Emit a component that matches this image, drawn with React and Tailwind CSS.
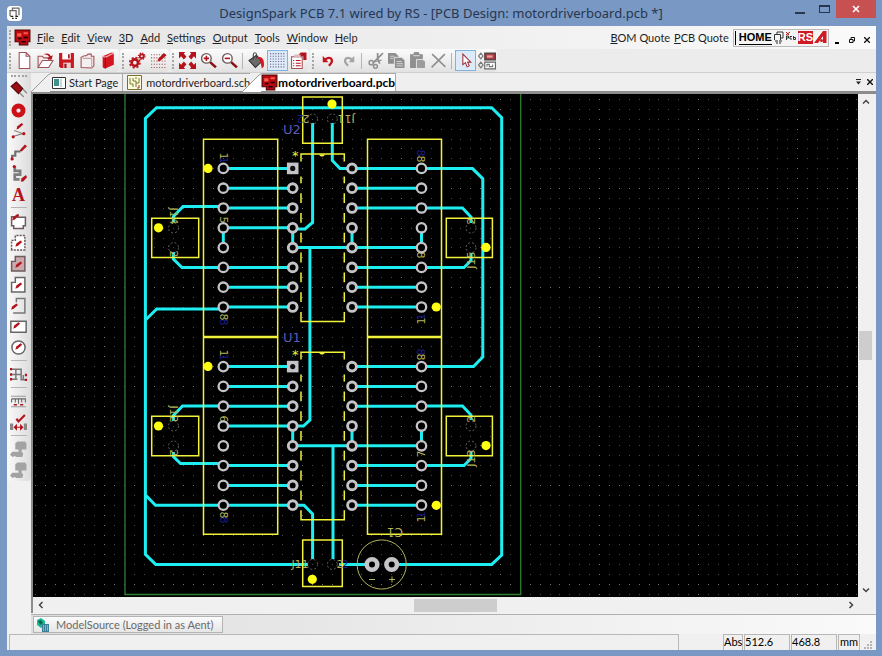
import React from 'react'
import clsx from 'clsx'

const RED = '#b5121b'
const GREY = '#8f8f8f'
const CYAN = '#1ceef2'
const YELLOW = '#f2f23a'
const DIM_YELLOW = '#b4b45a'

const Icon = ({ children, size = 17 }) => (
  <svg width={size} height={size} viewBox="0 0 16 16" fill="none" aria-hidden="true">
    {children}
  </svg>
)

const Pen = ({ x = 0, y = 0 }) => (
  <path d={`M${x} ${y + 6}l1-3 4-3 1.500 1.500-4 3.500z`} fill={RED} />
)

const BoardIcon = () => (
  <Icon>
    <path d="M1 1h14v11h-2v3H5v-3H1z" fill="#b80a10" stroke="#4b0508" />
    <path d="M3 4h4v3H3zM9 3h4v2H9z" fill="#ff5a4a" />
    <path d="M4 9h3M9 8h4M7 12h4" stroke="#1c0202" strokeWidth="1.500" />
  </Icon>
)

const NewFile = () => (
  <Icon><path d="M3 .5h6.500L13 4v11.500H3zM9.500.5V4H13" fill="#fff" stroke="#a0525a" /></Icon>
)
const OpenFile = () => (
  <Icon>
    <path d="M1 14.500V4h4l1.500 1.500H11V8" fill="#f6eaea" stroke="#a0525a" />
    <path d="M1 14.500L5 8h10l-4 6.500z" fill="#fff" stroke="#a0525a" />
    <path d="M6 2c4-1.500 6-.5 7 2l2-1-1.500 4.500L9.500 6l2-1C11 3 9 2 6 2z" fill={RED} />
  </Icon>
)
const Save = () => (
  <Icon>
    <path d="M1 1h14v14H2.500L1 13.500z" fill="#cc1720" />
    <path d="M4 1h8v6H4z" fill="#fff" />
    <path d="M5 10h7v5H5z" fill="#e8d0d0" />
    <path d="M6 11h2v4H6zM9.500 2h1.500v4H9.500z" fill="#a00f16" />
  </Icon>
)
const Folder = () => (
  <Icon>
    <path d="M2 14.500V5l3-1.500h2L8.500 2h3v2H14v9l-2 2z" fill="#f5f0f0" stroke="#a0525a" />
    <path d="M3.500 6H12v9" stroke="#c9a0a4" />
  </Icon>
)
const Book = () => (
  <Icon>
    <path d="M2.500 4L11 .5l2 .5v11L5 15.500l-2.500-1z" fill="#d51620" />
    <path d="M2.500 4L5 5l8-4" stroke="#f4b6b8" />
    <path d="M5 5v10.500" stroke="#8d0d13" />
  </Icon>
)
const Gears = () => (
  <Icon>
    <circle cx="5.500" cy="10" r="3" stroke={RED} strokeWidth="2.500" />
    <circle cx="5.500" cy="10" r="4.800" stroke={RED} strokeWidth="1.500" strokeDasharray="2 1.770" />
    <circle cx="12" cy="4" r="1.800" stroke={RED} strokeWidth="1.600" />
    <circle cx="12" cy="4" r="3" stroke={RED} strokeWidth="1.200" strokeDasharray="1.300 1.050" />
  </Icon>
)
const Dots = () => (
  <g stroke="#a84a52" strokeWidth="1" strokeDasharray="1 1.500">
    <path d="M1 2.500h14M1 5.500h14M1 8.500h14M1 11.500h14M1 14.500h14" />
  </g>
)
const GridEdit = () => (
  <Icon>
    <Dots />
    <path d="M7 9l1-3 5-5 2.500 2-5.500 5z" fill={RED} />
  </Icon>
)
const GridIcon = () => (
  <Icon>
    <g stroke="#6f5a8c" strokeDasharray="1 1.500">
      <path d="M1 1.500h14M1 4h14M1 6.500h14M1 9h14M1 11.500h14M1 14h14" />
    </g>
  </Icon>
)
const Fit = () => (
  <Icon>
    <path d="M0 0h6L4.500 1.500 7 4.500 4.500 7 2 4 0 6zM16 0h-6l1.500 1.500L9 4.500 11.500 7 14 4l2 2zM0 16h6l-1.500-1.500L7 11.500 4.500 9 2 12l-2-2zM16 16h-6l1.500-1.500L9 11.500 11.500 9l2.500 3 2-2z" fill={RED} />
  </Icon>
)
const Magnify = ({ plus }) => (
  <Icon>
    <path d="M9.500 9.500l5.500 5" stroke="#8d0d13" strokeWidth="2.400" />
    <circle cx="6" cy="6" r="4.500" fill="#fff" stroke="#6a5a5c" strokeWidth="1.300" />
    <path d={plus ? 'M3.500 6h5M6 3.500v5' : 'M3.500 6h5'} stroke={RED} strokeWidth="1.500" />
  </Icon>
)
const Bucket = () => (
  <Icon>
    <path d="M1 8l7-5 5 6-6 5.500z" fill="#6a6a6a" stroke="#333" />
    <path d="M5 7V2.500C5 0 8 0 8 2.500V6" stroke="#444" />
    <path d="M9 4.500c5 0 6.500 3 6 9l-2 2-1-5z" fill="#d51620" />
  </Icon>
)
const Report = () => (
  <Icon>
    <path d="M1.500 4.500h10v11h-10z" fill="#fff" stroke="#a0525a" />
    <path d="M3 8h1M3 10.500h1M3 13h1M5.500 8H10M5.500 10.500H10M5.500 13H10" stroke={RED} />
    <path d="M7 4l3-3.500h5.500v7h-3V4z" fill={RED} />
    <path d="M4 2.500h6v3H4z" fill="#d9b9bb" />
  </Icon>
)
const Undo = ({ flip, color }) => (
  <Icon size={14}>
    <g transform={flip ? 'translate(16 0) scale(-1 1)' : undefined}>
      <path d="M5 6c4-3 7.500-1.500 7.500 2 0 2-1.500 3.500-3.500 5.500" stroke={color} strokeWidth="2.600" />
      <path d="M2 2v7.500h6.500z" fill={color} />
    </g>
  </Icon>
)
const Cut = () => (
  <Icon>
    <path d="M15 1L6 10M10 1v5l2 5" stroke={GREY} strokeWidth="1.600" />
    <circle cx="4" cy="10" r="2" stroke={GREY} strokeWidth="1.400" />
    <circle cx="8" cy="13.500" r="1.800" stroke={GREY} strokeWidth="1.400" />
    <path d="M6 9.500l8-2" stroke={GREY} />
  </Icon>
)
const Copy = () => (
  <Icon>
    <path d="M0 1h7l3 3v7H0z" fill={GREY} />
    <path d="M6 5h7l3 3v7.500H6z" fill={GREY} stroke="#eee" strokeWidth=".800" />
    <path d="M2 4h4M2 6h3M8 9h5M8 11h6M8 13h6" stroke="#ddd" strokeWidth=".800" />
  </Icon>
)
const Paste = () => (
  <Icon>
    <path d="M1 2h3l1-2h4l1 2h3v13H1z" fill={GREY} />
    <path d="M4 3.500h6" stroke="#ddd" />
    <path d="M7 7h6l2.500 2v6.500H7z" fill="#9c9c9c" stroke="#eee" strokeWidth=".800" />
  </Icon>
)
const Delete = () => (
  <Icon><path d="M2 2l12.500 12M14 2L1.500 14.500" stroke={GREY} strokeWidth="1.500" /></Icon>
)
const Cursor = () => (
  <Icon><path d="M5.500 2v10l2.500-2 1.500 4 2-1-1.500-3.500h3z" fill="#fff" stroke="#a0323a" /></Icon>
)
const Swap = () => (
  <Icon size={18}>
    <path d="M2.500 1l2 2.500-2 2.500-2-2.500zM2.500 9l2 2.500-2 2.500-2-2.500z" stroke="#777" />
    <path d="M6 1h9.500v6H6z" fill="#a93a42" stroke="#444" />
    <path d="M8 3h5v2H8z" fill="#e7a0a4" />
    <path d="M6 9h9.500v6H6z" fill="#fff" stroke="#666" />
    <path d="M8 13v-2h2v2h3v-2" stroke="#777" />
  </Icon>
)

// left tool column
const Component = () => (
  <Icon>
    <path d="M1 5l5-4 6 6-4 5z" fill="#9b0e15" stroke="#4b0508" />
    <path d="M9 11l4 4M12 7.500l4 4" stroke="#888" strokeWidth="1.200" />
  </Icon>
)
const Pad = () => (
  <Icon><circle cx="8" cy="8" r="4.300" stroke="#cc1119" strokeWidth="4.600" /></Icon>
)
const Connection = () => (
  <Icon>
    <path d="M2 13l10-3-8-3" stroke="#8a7a7a" />
    <circle cx="3" cy="13" r="1.500" fill={RED} />
    <circle cx="13" cy="10" r="1.500" fill={RED} />
    <Pen x={6} y={0} />
  </Icon>
)
const Track = () => (
  <Icon>
    <path d="M2 15v-4h3V7h5" stroke="#6e6e6e" strokeWidth="2" />
    <path d="M9 6l5-5.500 2 1.500-5 5z" fill={RED} />
    <circle cx="2" cy="14" r="1.500" fill={RED} />
  </Icon>
)
const TrackEdit = () => (
  <Icon>
    <path d="M4.500 1v4.500h5V9h-5v4.500H9" stroke="#7d7d7d" strokeWidth="2.600" />
    <circle cx="4" cy="1.500" r="1.500" fill={RED} />
    <path d="M10 15.500l1-3 4-3 1 2-3.500 4z" fill={RED} />
  </Icon>
)
const TextTool = () => (
  <span className="font-['Liberation_Serif',serif] text-lg leading-none font-bold text-[#b5121b]">A</span>
)
const Shape = ({ d, fill = '#fff', stroke = '#6e5a5c', dash, px = 5, py = 6 }) => (
  <Icon>
    <path d={d} fill={fill} stroke={stroke} strokeWidth="1.400" strokeDasharray={dash} />
    <Pen x={px} y={py} />
  </Icon>
)
const L_SHAPE = 'M1.500 15V6H5V1.500h9V15z'
const Nets = () => (
  <Icon>
    <path d="M1 3h4.500v9.500M1 8h9.500v5H15M5.500 3h5v5M1 12.500h6M12.500 8.500v4" stroke="#777" strokeWidth="1.400" />
    <path d="M0 3h2M0 8h2M0 12.500h2M14 13h2M14 8.500h2" stroke={RED} strokeWidth="2.200" />
  </Icon>
)
const Measure = () => (
  <Icon>
    <path d="M1 3h14M1 13h14" stroke="#999" />
    <path d="M1.500 5.500h13V9M1.500 5.500V9M5 6v3M8 6v4M11 6v3" stroke="#666" />
    <path d="M3.500 11h3M9.500 11h3" stroke={RED} strokeWidth="1.500" />
  </Icon>
)
const Check = () => (
  <Icon>
    <path d="M0 9h3v6H0zM13 9h3v6h-3z" fill="#888" />
    <path d="M6 4.500l2 2.500 6-6" stroke={RED} strokeWidth="2" />
    <path d="M4 12.500h8M4 12.500l2-2v4zM12 12.500l-2-2v4z" stroke={RED} fill={RED} />
  </Icon>
)
const Ghost = () => (
  <Icon>
    <path d="M5 2l2-1.500h7L15.500 2v6H11v2l1.500 2-1 3H6l-1.500-1-2 1L0 13l2-3h6V8H5z" fill="#a3a3a3" />
  </Icon>
)

const TOOLBARS = [
  [['New', NewFile], ['Open', OpenFile], ['Save', Save], ['Library', Folder], ['Docs', Book]],
  [['Technology', Gears], ['Grid settings', GridEdit]],
  [
    ['View all', Fit],
    ['Zoom in', () => <Magnify plus />],
    ['Zoom out', () => <Magnify />],
    null,
    ['Colours', Bucket],
    ['Grid', GridIcon, true],
    ['Report', Report],
  ],
  [
    ['Undo', () => <Undo color="#c4121b" />],
    ['Redo', () => <Undo flip color="#a5a5a5" />],
    null,
    ['Cut', Cut], ['Copy', Copy], ['Paste', Paste], ['Delete', Delete],
    null,
    ['Select', Cursor, true],
    ['Swap layer', Swap],
  ],
]

const SIDE_TOOLS = [
  [
    ['Add component', Component], ['Add pad', Pad], ['Add connection', Connection],
    ['Add track', Track], ['Edit track', TrackEdit], ['Add text', TextTool],
  ],
  [
    ['Board outline', () => <Shape d="M1.500 3.500h4l2-1.500v2h7v8h-2v2.500h-9V12h-2z" px={2} py={1} />],
    ['Dashed shape', () => <Shape d={L_SHAPE} dash="2 1" />],
    ['Copper area', () => <Shape d={L_SHAPE} fill="#c9a9ab" />],
    ['Open shape', () => <Shape d={L_SHAPE} stroke="#666" />],
    ['Line shape', () => <Shape d="M6 5V1.500h8V15H3" fill="none" stroke="#777" px={1} />],
    ['Rectangle', () => <Shape d="M.800 3h14.400v10.500H.800z" stroke="#666" px={3} py={4} />],
    ['Circle', () => <Shape d="M8 1.800a6.200 6.200 0 110 12.400 6.200 6.200 0 010-12.400" stroke="#666" py={4} />],
  ],
  [['Autoroute', Nets]],
  [['Measure', Measure], ['Design rule check', Check]],
  [['Push', Ghost], ['Pull', Ghost]],
]

const MENU = ['File', 'Edit', 'View', '3D', 'Add', 'Settings', 'Output', 'Tools', 'Window', 'Help']

const Underlined = ({ text }) => (
  <>
    <span className="underline underline-offset-1">{text[0]}</span>
    {text.slice(1)}
  </>
)

const TitleBar = () => (
  <header className="flex h-[26px] shrink-0 items-start">
    <div className="mt-[6px] flex size-[15px] items-center justify-center rounded-sm bg-white">
      <Icon size={13}>
        <path d="M2.500 11V4.500H10V11M5.500 4V1.500h8V10" stroke="#666" strokeWidth="1.500" />
        <path d="M3 11.500h3.500M9 11.500h3.500M5 14h2M9 14h2" stroke="#222" strokeWidth="1.500" />
      </Icon>
    </div>
    <h1 className="flex-1 pl-[72px] text-center font-['Noto_Sans',sans-serif] text-[13px] leading-[27px] whitespace-nowrap text-[#27364d]">
      DesignSpark PCB 7.1 wired by RS - [PCB Design: motordriverboard.pcb *]
    </h1>
    <button type="button" aria-label="Minimize" className="flex h-[18px] w-6 items-end justify-center pb-1">
      <span className="h-[2px] w-[10px] bg-[#27364d]" />
    </button>
    <button type="button" aria-label="Maximize" className="flex h-[18px] w-6 items-center justify-center">
      <span className="h-2 w-[11px] border border-t-2 border-[#27364d]" />
    </button>
    <button type="button" aria-label="Close" className="flex h-[18px] w-10 items-center justify-center bg-[#c75050]">
      <svg width="8" height="8" viewBox="0 0 8 8"><path d="M1 1l6 6M7 1L1 7" stroke="#fff" strokeWidth="1.600" /></svg>
    </button>
  </header>
)

const MenuBar = () => (
  <div className="flex h-[23px] shrink-0 items-center bg-linear-to-r from-[#e4e4e4] to-[#fafafa] pr-[6px]">
    <Grip />
    <BoardIcon />
    <nav className="ml-[6px] flex gap-[7px]">
      {MENU.map((item) => (
        <button type="button" key={item}><Underlined text={item} /></button>
      ))}
    </nav>
    <div className="ml-auto flex items-center">
      <a href="#bom" className="mr-1"><Underlined text="BOM Quote" /></a>
      <a href="#pcb" className="mr-1"><Underlined text="PCB Quote" /></a>
      <div className="mr-[6px] flex h-[18px] items-center gap-px border border-[#b9b9b9] bg-[#f4f4f4] px-px">
        <span className="mr-[2px] h-[14px] w-px bg-black" />
        <a href="#home" className="border-b border-black font-['Liberation_Sans',sans-serif] text-[11px] leading-[13px] font-bold text-black">HOME</a>
        <svg width="24" height="13" viewBox="0 0 24 13" fill="none" aria-hidden="true">
          <path d="M1.500 9V3.500h6V9M4 3V1h6v6H8" stroke="#333" />
          <path d="M2 10h3M6 10h3M3 12h2M6 12h2" stroke="#222" strokeWidth="1.200" />
          <path d="M13 1l3 3M13 4l4-3" stroke="#b5121b" />
          <path d="M13.500 9V5h2v2h-2M19 5.500h-2V8h2M20.500 5v3.500h2v-2h-2" stroke="#333" />
        </svg>
        <b className="bg-[#cf1a22] font-['Liberation_Sans',sans-serif] text-[11px] leading-[13px] text-white">RS</b>
        <svg width="13" height="13" viewBox="0 0 13 13" aria-hidden="true">
          <path d="M0 12L9 0h3.500v12H9V5L4 12z" fill="#cf1a22" />
          <circle cx="7.500" cy="9.500" r="1.500" fill="#cf1a22" />
        </svg>
      </div>
      <button type="button" aria-label="Minimize document" className="flex h-3 w-[14px] items-end"><span className="h-[2px] w-1 bg-black" /></button>
      <button type="button" aria-label="Restore document" className="mt-1 w-[15px]">
        <svg width="6" height="6" viewBox="0 0 6 6" fill="none"><path d="M2 2V.500h3.500V4H4M.500 2.500H4v3H.500z" stroke="#111" /></svg>
      </button>
      <button type="button" aria-label="Close document" className="mt-1">
        <svg width="6" height="6" viewBox="0 0 6 6"><path d="M0 0l6 6M6 0L0 6" stroke="#111" strokeWidth="1.300" /></svg>
      </button>
    </div>
  </div>
)

const Grip = () => (
  <span className="mr-[3px] ml-[2px] h-4 w-0 border-l-[2px] border-dotted border-[#a5a5a5]" />
)

const Toolbars = () => (
  <div className="flex h-6 shrink-0 gap-px border-b border-[#d0d0d0] bg-[#ececec]">
    {TOOLBARS.map((group, g) => (
      <div key={g} className="flex items-center rounded-sm bg-linear-to-b from-[#fbfbfb] to-[#e2e2e2]">
        <Grip />
        {group.map((tool, i) => {
          if (!tool) return <span key={i} className="mr-[3px] ml-[2px] h-4 w-px bg-[#b5b5b5]" />
          const [label, Glyph, active] = tool
          return (
            <button
              type="button"
              key={label}
              aria-label={label}
              className={clsx(
                'flex h-[21px] w-[21px] items-center justify-center',
                active && 'border border-[#7fb2e0] bg-[#dcebf8]'
              )}
            >
              <Glyph />
            </button>
          )
        })}
      </div>
    ))}
  </div>
)

const SideBar = () => (
  <aside className="w-6 shrink-0 bg-[#f1f1f1]">
    <div className="flex flex-col items-center rounded-b-sm bg-linear-to-r from-[#fafafa] to-[#dcdcdc] pr-px">
      <span className="my-[2px] h-0 w-4 border-t-[2px] border-dotted border-[#a5a5a5]" />
      {SIDE_TOOLS.map((group, g) => (
        <React.Fragment key={g}>
          {g > 0 && <span className="mt-[2px] mb-[3px] h-px w-4 bg-[#b5b5b5]" />}
          {group.map(([label, Glyph]) => (
            <button type="button" key={label} aria-label={label} className="flex size-[21px] items-center justify-center">
              <Glyph />
            </button>
          ))}
        </React.Fragment>
      ))}
    </div>
  </aside>
)

const Slant = ({ active }) => (
  <svg width="19" height="19" viewBox="0 0 19 19" className="shrink-0" aria-hidden="true">
    <path d="M0 19L17 2l2-1v18z" fill={active ? '#fff' : '#f0f0f0'} />
    <path d="M0 19L17 2l2-1" stroke="#9a9a9a" fill="none" />
  </svg>
)

const Tabs = () => (
  <div className="flex h-[21px] shrink-0 items-end border-b-[3px] border-[#8c8c8c] bg-[#efefef]">
    <button type="button" className="flex h-full items-center">
      <Slant />
      <span className="flex h-full items-center gap-[3px] border-t border-r border-[#a9a9a9] pr-1 pl-[2px]">
        <svg width="14" height="12" viewBox="0 0 14 12" aria-hidden="true">
          <path d="M.500.500h13v11H.500z" fill="#fff" stroke="#333" />
          <path d="M2 2h5v7H2z" fill="#3f8f8a" />
          <path d="M8 2h2v8H8z" fill="#c9d6d4" />
        </svg>
        Start Page
      </span>
    </button>
    <button type="button" className="flex h-full items-center gap-1 border-t border-[#a9a9a9] pl-1">
      <svg width="15" height="15" viewBox="0 0 15 15" fill="none" aria-hidden="true">
        <path d="M.500.500h14v14H.500z" fill="#fbfbe0" stroke="#77702f" />
        <path d="M3 3v6h3v3M6 3v3h3v6M12 3v5H9M9 2v2" stroke="#7a7a25" />
        <path d="M12 10v3h-2" stroke="#a03030" />
      </svg>
      motordriverboard.sch
    </button>
    <button type="button" className="-ml-2 flex h-full items-center">
      <Slant active />
      <span className="flex h-full items-center border-t border-r border-[#a9a9a9] bg-white text-xs font-bold text-black">
        <BoardIcon />
        motordriverboard.pcb
      </span>
    </button>
    <div className="mr-[3px] ml-auto flex h-full items-center gap-[6px]">
      <svg width="5" height="6" viewBox="0 0 5 6"><path d="M0 .500h5" stroke="#222" /><path d="M0 2.500h5L2.500 5.500z" fill="#222" /></svg>
      <button type="button" aria-label="Close tab">
        <svg width="6" height="6" viewBox="0 0 6 6"><path d="M0 0l6 6M6 0L0 6" stroke="#111" strokeWidth="1.400" /></svg>
      </button>
    </div>
  </div>
)

const COLS = [223.3, 292.7, 352, 421.5]
const CHIPS = [168.4, 366.6]
const PITCH = 19.8
const ROWS = [0, 1, 2, 3, 4, 5, 6, 7]

const TRACKS = [
  // board perimeter
  'M308 564.400H155.700L145.400 554.300V118.500L156.500 107.700H491.700L501.700 117.700V555L491.700 564.400H391.500M339 564.400H372',
  // upper driver
  'M421 168.600H472.500L482.800 178.600V357L473.500 366.600H421',
  'M421 208H462.500L471 217V223',
  'M223 206.500H183L173.400 216.500V222',
  'M292 229H305L312.600 222.500V123',
  'M352 168.600H340L332.300 160.500V123',
  'M292 247.600H421.500M309.900 247.600V420L303.500 426H292',
  'M223 267.500H182L173.400 259V252',
  'M421 267.500H464L471 260.500V253',
  'M223 309H156.700L146 319.500',
  'M223.300 228V247M292.700 228V247M352 228V247M421.500 228V247',
  // lower driver
  'M223 405.900H182.500L173.400 415.500V421',
  'M421 406H462.500L471 415V420',
  'M292 445.700H421.500M333 445.700V559',
  'M223 463.500H180.500L173.400 456.500V452',
  'M421 465.600H464L471 458.500V451',
  'M223 505.200H155.500L146 495.500',
  'M292 505.200H304L312.600 514V559',
  'M292.700 426V446M352 426V446M421.500 426V446',
]

const DOTS = [
  [208, 168.4], [436.3, 307], [208, 366.4], [436.3, 505.3], [158.5, 227.8],
  [486, 247.4], [158.5, 426], [486, 445.6], [332, 104], [312.3, 579.3],
]

const HOLES = [
  [173.5, 228], [173.5, 247.7], [471, 228], [471, 247.7], [173.5, 426], [173.5, 446],
  [471, 426], [471, 446], [312.6, 119], [332.3, 119], [312.6, 564.4], [332.3, 564.4],
]

// [text, x, y, rotation, blue]
const LABELS = [
  ['1', 223.5, 160, 90, true], ['1', 223.5, 156, 90],
  ['5', 223.5, 220, 90], ['8', 223.5, 322, 90, true], ['8', 223.5, 317, 90],
  ['8', 421, 153, 90, true], ['8', 421, 159, 90], ['8', 421, 255, 90],
  ['1', 421, 317, 270, true], ['1', 421, 321, 270],
  ['1', 223.5, 357, 90, true], ['1', 223.5, 353, 90], ['6', 223.5, 419, 90],
  ['8', 223.5, 520, 90, true], ['8', 223.5, 515, 90],
  ['8', 421, 352, 90, true], ['8', 421, 357, 90], ['7', 421, 454, 270],
  ['1', 421, 515, 270, true], ['1', 421, 519, 270],
  ['J14', 174, 216, 90], ['2', 174, 254, 90], ['2', 471, 221, 270], ['J15', 471, 260, 270],
  ['J12', 174, 414, 90], ['2', 174, 453, 90], ['2', 471, 419, 270], ['J13', 471, 458, 270],
  ['2', 300, 119, 180, true], ['2', 306, 119, 180], ['J11', 346, 119, 180],
  ['J11', 300, 564, 0], ['2', 345, 564, 0, true], ['2', 340, 564, 0], ['C1', 395, 532, 180],
]

const Chip = ({ top, name, nameY }) => {
  const bottom = top + 7 * PITCH
  return (
    <g>
      <g stroke={YELLOW} strokeWidth="1.500">
        <path d={`M301 ${top - 7}v-7.400h43.300v7.400M301 ${bottom + 5}v9.600h43.300v-9.600`} />
        {ROWS.slice(0, 7).map((r) => {
          const y = top + r * PITCH + (r === 0 ? 8 : 5)
          const end = top + (r + 1) * PITCH - 5
          return <path key={r} d={`M301 ${y}V${end}M344.300 ${y}V${end}`} />
        })}
      </g>
      <path d={`M319.500 ${top - 14}h5v1l-1.500 1h-2l-1.500-1z`} fill={YELLOW} />
      <text x="283" y={nameY} fill="#5a5ab8" fontSize="13">{name}</text>
      <text x="292" y={top - 8} fill={YELLOW} fontSize="13">*</text>
      {ROWS.map((r) => {
        const y = top + r * PITCH
        if (r === 4) return null
        return (
          <path
            key={r}
            d={`M223.300 ${y}H292.700M352 ${y}H${r === 3 ? 352 : 421.5}`}
            stroke={CYAN}
            strokeWidth="3"
          />
        )
      })}
    </g>
  )
}

const Pads = ({ top }) =>
  COLS.flatMap((x, c) =>
    ROWS.map((r) => {
      const y = top + r * PITCH
      if (c === 1 && r === 0) {
        return (
          <g key={`${c}-${r}`}>
            <path d={`M${x - 5.8} ${y - 5.8}h11.600v11.600h-11.600z`} fill="#c4c4c8" />
            <circle cx={x} cy={y} r="2.600" fill="#111" />
          </g>
        )
      }
      const inner = c === 1 || c === 2
      return (
        <circle
          key={`${c}-${r}`}
          cx={x}
          cy={y}
          r={inner ? 4.4 : 4.7}
          fill="#000"
          stroke="#c4c4c8"
          strokeWidth={inner ? 2.9 : 2.3}
        />
      )
    })
  )

const Board = () => (
  <svg className="absolute inset-0 size-full bg-black" fill="none" role="img" aria-label="PCB layout">
    <defs>
      <pattern id="grid" x="71" y="94" width="99" height="99" patternUnits="userSpaceOnUse">
        {[0, 10, 20, 30, 40, 50, 59, 69, 79, 89].map((x) =>
          [0, 10, 20, 30, 40, 50, 59, 69, 79, 89].map((y) => (
            <rect key={`${x}-${y}`} x={x} y={y} width="1" height="1" fill={x && y ? '#4a4a4a' : '#767676'} />
          ))
        )}
      </pattern>
    </defs>
    <rect width="100%" height="100%" fill="url(#grid)" />
    <g transform="translate(-33 -94)" fontFamily="'DejaVu Sans', sans-serif">
      <path d="M125 90V594.500H520.700V90" stroke="#2f7d32" strokeWidth="1.300" />
      <g stroke={CYAN} strokeWidth="3">
        {TRACKS.map((d) => <path key={d} d={d} />)}
      </g>
      <Chip top={CHIPS[0]} name="U2" nameY={134} />
      <Chip top={CHIPS[1]} name="U1" nameY={342} />
      <g stroke={YELLOW} strokeWidth="1.500">
        <path d="M203.500 139.200H277.700V534.300H203.500zM367.500 139.200H441.500V534.300H367.500z" />
        <path d="M203.500 337H277.700M367.500 337H441.500" strokeWidth="2.600" />
        <path d="M302.700 97H342.300V143.300H302.700zM302.700 540H342.300V586.600H302.700z" />
        <path d="M151.700 218.200H198.700V257.400H151.700zM151.700 416.200H198.700V455.800H151.700z" />
        <path d="M446.300 218.200H492.400V257.400H446.300zM446.300 416.200H492.400V455.800H446.300z" />
      </g>
      {HOLES.map(([x, y]) => (
        <circle key={`${x}-${y}`} cx={x} cy={y} r="5" stroke="#6c6c6c" strokeWidth=".900" strokeDasharray="2 2" />
      ))}
      <circle cx="381.700" cy="564.500" r="24.600" stroke={DIM_YELLOW} />
      <circle cx="372" cy="564.500" r="5.300" fill="#000" stroke="#c4c4c8" strokeWidth="4.600" />
      <circle cx="391.700" cy="564.500" r="5.300" fill="#000" stroke="#c4c4c8" strokeWidth="4.600" />
      <path d="M369 579.500h6M389 579.500h6M392 576.500v6" stroke={DIM_YELLOW} />
      {LABELS.map(([text, x, y, angle, blue], i) => (
        <text
          key={i}
          transform={`translate(${x} ${y}) rotate(${angle})`}
          textAnchor="middle"
          dy="4"
          fontSize={text === 'C1' ? 12 : 11}
          fill={blue ? '#1c1c8c' : DIM_YELLOW}
        >
          {text}
        </text>
      ))}
      <Pads top={CHIPS[0]} />
      <Pads top={CHIPS[1]} />
      {DOTS.map(([x, y]) => <circle key={`${x}-${y}`} cx={x} cy={y} r="4.600" fill="#ffff12" />)}
    </g>
  </svg>
)

const Chevron = ({ d }) => (
  <svg width="8" height="8" viewBox="0 0 8 8" fill="none"><path d={d} stroke="#444" strokeWidth="1.500" /></svg>
)

const Workspace = () => (
  <main className="flex min-w-0 flex-1 flex-col">
    <Tabs />
    <div className="flex min-h-0 flex-1 border-l-2 border-[#8c8c8c] bg-[#f0f0f0]">
      <div className="flex min-w-0 flex-1 flex-col">
        <div className="relative min-h-0 flex-1 overflow-hidden">
          <Board />
        </div>
        <div className="flex h-4 items-center">
          <button type="button" aria-label="Scroll left" className="flex w-[15px] justify-center"><Chevron d="M5.500 1l-3 3 3 3" /></button>
          <div className="flex h-[13px] flex-1">
            <div className="w-[46%]" />
            <div className="w-[10.500%] bg-[#cdcdcd]" />
          </div>
          <button type="button" aria-label="Scroll right" className="flex w-[15px] justify-center"><Chevron d="M2.500 1l3 3-3 3" /></button>
        </div>
      </div>
      <div className="mb-4 flex w-[15px] flex-col items-center">
        <button type="button" aria-label="Scroll up" className="flex h-[15px] items-center"><Chevron d="M1 5.500l3-3 3 3" /></button>
        <div className="flex w-[13px] flex-1 flex-col">
          <div className="h-[47%]" />
          <div className="h-[6%] bg-[#cdcdcd]" />
        </div>
        <button type="button" aria-label="Scroll down" className="flex h-[15px] items-center"><Chevron d="M1 2.500l3 3 3-3" /></button>
      </div>
      <div className="w-[3px]" />
    </div>
    <div className="mt-px flex h-5 shrink-0 items-center border-t border-[#b0b0b0] bg-linear-to-r from-[#dedede] to-[#fafafa]">
      <button type="button" className="ml-[2px] flex h-[17px] w-[190px] items-center gap-[6px] border border-[#b4b4b4] bg-linear-to-b from-[#fbfbfb] to-[#e6e6e6] pl-[2px] whitespace-nowrap text-[#6b6b6b]">
        <svg width="14" height="14" viewBox="0 0 14 14" aria-hidden="true">
          <path d="M1 2l4-2 4 3v5l-4 2-4-3z" fill="#16b8a0" />
          <path d="M2 3l3-1 2 3-3 2z" fill="#0a6b3c" />
          <path d="M6 6h7v8H6z" fill="#3b7e96" />
          <path d="M7 8h5M7 10h5M7 12h5" stroke="#cfe6ee" strokeDasharray="1 1" />
        </svg>
        ModelSource (Logged in as Aent)
      </button>
    </div>
  </main>
)

const StatusBar = () => (
  <footer className="flex h-4 shrink-0 items-stretch gap-px bg-[#f0f0f0] pl-[2px] leading-[14px] text-black">
    <div className="flex-1 border-t border-r border-l border-[#b8b8b8]" />
    <div className="w-[42px]" />
    <div className="w-5 border-t border-r border-l border-[#b8b8b8]">Abs</div>
    <div className="w-[46px] border-t border-r border-l border-[#b8b8b8]">512.6</div>
    <div className="w-[46px] border-t border-r border-l border-[#b8b8b8]">468.8</div>
    <div className="w-[22px] border-t border-r border-l border-[#b8b8b8] text-center">mm</div>
    <svg width="15" height="16" viewBox="0 0 15 16" aria-hidden="true">
      <path d="M9 7h2v2H9zM6 10h2v2H6zM9 10h2v2H9zM3 13h2v2H3zM6 13h2v2H6zM9 13h2v2H9z" fill="#b4b4b4" />
    </svg>
  </footer>
)

const App = () => (
  <div className="flex h-screen flex-col overflow-hidden bg-[#7998c4] pr-[6px] pb-[6px] pl-[7px] font-['Lato',sans-serif] text-[11px] leading-4 text-[#1e1e1e]">
    <TitleBar />
    <MenuBar />
    <Toolbars />
    <div className="flex min-h-0 flex-1 bg-[#f1f1f1]">
      <SideBar />
      <Workspace />
    </div>
    <StatusBar />
  </div>
)

export default App
